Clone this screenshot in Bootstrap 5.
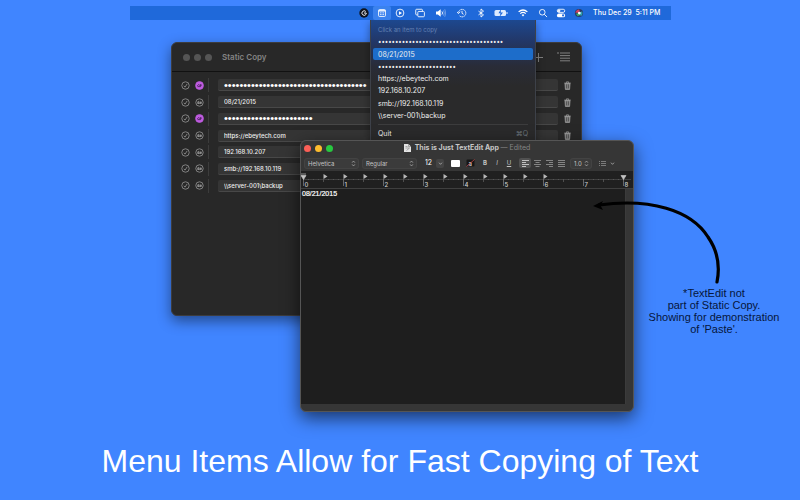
<!DOCTYPE html>
<html lang="en">
<head>
<meta charset="utf-8">
<meta name="viewport" content="width=device-width, initial-scale=1">
<title>Static Copy</title>
<link href="https://cdn.jsdelivr.net/npm/bootstrap@5.3.0/dist/css/bootstrap.min.css" rel="stylesheet">
<style>
  body { background: #4085ff; font-family: Inter, "Liberation Sans", sans-serif; font-size: 7px; line-height: 12px; color: #eee; }
  button, input, select { font: inherit; color: inherit; background: none; border: 0; padding: 0; }
  svg { display: block; flex: none; }
  .ico { width: 10px; height: 10px; fill: none; stroke: currentColor; stroke-width: 1.4; }
  .ico.heavy { stroke-width: 2; }
  .desktop { padding-top: 6px; padding-bottom: 20px; overflow: hidden; }

  .menubar { width: 100%; max-width: 541px; height: 14px; background: #1f69da; color: #fff; font-size: 7px; padding-right: 10px; z-index: 1; }
  .menubar button { width: 18px; height: 14px; display: flex; align-items: center; justify-content: center; }
  .menubar button.mid { width: 21px; }
  .menubar button.big { width: 23px; }
  .menubar button.open { background: #3b82ee; border-radius: 2px; }
  .clock { margin-left: 5px; white-space: pre; font-weight: 500; }

  .win { position: absolute; border-radius: 6px; }
  .win-copy { top: 42px; left: calc(50% - 229px); width: 411px; min-height: 274px; background: #282828; border: 1px solid #3c3c3e; box-shadow: 0 5px 14px rgba(0,0,0,.45); }
  .win-copy header { height: 29px; padding: 0 11px; border-bottom: 1px solid #111; color: #848484; }
  .light { width: 7px; height: 7px; border-radius: 50%; background: #555; }
  .win-copy .light { margin-right: 4px; }
  .light.close-btn { background: #fb5f57; }
  .light.min-btn { background: #fdbc2e; }
  .light.zoom-btn { background: #28c840; }
  .win-title { font-size: 8px; font-weight: 600; margin-left: 6px; }
  .add { margin-right: 14px; }
  .rows { height: 117px; margin-top: 5px; padding: 0 9px; }
  .rows li { flex: 1; }
  .rows .ico { color: #a0a0a0; stroke-width: 1.3; width: 9px; height: 9px; }
  .rows .ico.on { color: #bf5ce0; }
  .rows .eye { margin-left: 5px; }
  .rows .rule { width: 1px; height: 14px; background: #3c3c3c; margin: 0 9px 0 4px; }
  .rows input { height: 12px; min-width: 0; background: #353535; border-radius: 2px; padding: 1px 6px 0; border-bottom: 1px solid #484848; color: #f0f0f0; font-size: 6px; font-weight: 500; }
  .rows input.dots { font-family: "Liberation Sans", sans-serif; font-size: 11px; font-weight: 400; color: #fff; padding-top: 0; }
  .rows .bin { color: #b0b0b0; margin-left: 5px; }

  .drop { position: absolute; top: 20px; left: calc(50% - 30px); width: 166px; height: 124px; padding: 3px 2px 0; border-radius: 0 0 4px 4px; background: linear-gradient(#1d488f, #22386a 20px, #292c38 46px, #2a2a2b 66px); border: 1px solid #3d4149; border-top: 0; box-shadow: 0 3px 8px rgba(0,0,0,.4); }
  .drop .picks { height: 98px; }
  .drop .picks > * { flex: 1; padding: 1px 5px 0; text-align: left; line-height: 11px; white-space: nowrap; min-height: 0; }
  .drop .hint { font-size: 6px; color: #6480b3; }
  .drop .dots { font-family: "Open Sans", sans-serif; font-size: 9px; }
  .drop .picked { background: #1d6dca; border-radius: 2px; }
  .drop hr { margin: 3px 5px 3px; border-color: #777; }
  .quit { padding: 0 5px; }

  .win-edit { top: 140px; left: calc(50% - 100px); width: 334px; min-height: 272px; background: #363636; border: 1px solid #555; box-shadow: 0 6px 18px rgba(0,0,0,.6); overflow: hidden; }
  .win-edit header { height: 14px; padding: 0 3px; gap: 4px; position: relative; }
  .win-edit .doc-title { position: absolute; inset: 0; font-size: 7px; font-weight: 700; color: #c8c8c8; pointer-events: none; }
  .doc-title small { font-size: 7px; font-weight: 400; color: #858585; }
  .tools { height: 16px; padding: 0 4px; font-size: 6px; color: #c4c4c4; }
  .pick { position: relative; height: 9px; background: #3b3b3b; border-radius: 2px; box-shadow: 0 0 0 1px #434343; }
  .pick select { appearance: none; width: 100%; height: 9px; line-height: 9px; padding: 0 3px; display: block; }
  .pick svg { position: absolute; right: 2px; top: 1px; pointer-events: none; }
  .face { width: 53px; margin-right: 5px; }
  .spacing { width: 20px; margin: 0 8px 0 4px; }
  .size-box { width: 11px; margin-left: 4px; font-size: 7px; color: #fff; }
  .stepper { width: 8px; height: 9px; background: #444; border-radius: 2px; margin-right: 7px; display: flex; align-items: center; justify-content: center; }
  .swatch { width: 9px; height: 7px; margin-right: 6px; border-radius: 1px; background: #fff; }
  .fmt { width: 12px; height: 10px; display: flex; align-items: center; justify-content: center; border-radius: 2px; }
  .fmt.active { background: #505050; }
  .ruler { background: #202020; height: 18px; }
  .ruler text { font-size: 6px; font-weight: 500; fill: #d0d0d0; }
  .page { background: #1e1e1e; min-height: 215px; margin-right: 7px; border-right: 1px solid #3b3b3b; }
  .page textarea { resize: none; height: 214px; background: none; border: 0; color: #fff; padding: 0 1px; font: 7px/9px "Liberation Sans", Arial, sans-serif; display: block; outline: 0; -webkit-text-stroke: .2px #fff; }

  .note { position: absolute; top: 195px; left: calc(50% + 190px); width: 196px; color: #06163c; }
  .note p { font: 11px/12px "Liberation Sans", Arial, sans-serif; padding-left: 52px; margin: 0; white-space: nowrap; }
  h1 { font: 32px/38px "Liberation Sans", Arial, sans-serif; color: #fff; }
</style>
<script src="https://cdn.jsdelivr.net/npm/bootstrap@5.3.0/dist/js/bootstrap.bundle.min.js"></script>
</head>
<body>
<svg width="0" height="0" class="position-absolute" aria-hidden="true">
  <symbol id="check" viewBox="0 0 16 16"><circle cx="8" cy="8" r="6.6"/><path d="M5 8.5l2.2 2.4L11 5"/></symbol>
  <symbol id="eye" viewBox="0 0 16 16"><circle cx="8" cy="8" r="6.6"/><path d="M3.5 8.500Q5.5 5 8 7.500T12.500 7M4 9.500h8M6 6v4.500M10 6v4"/></symbol>
  <symbol id="eye-on" viewBox="0 0 16 16"><circle cx="8" cy="8" r="7" fill="currentColor"/><path d="M4 8.500Q6 5 8 7.500T12 7M4.500 10H10M10 5.500v4" stroke="#46205a" stroke-width="1.600"/></symbol>
  <symbol id="bin" viewBox="0 0 16 16"><path d="M2 3.800h12M6 3.500V1.500h4v2"/><path d="M3.500 4.500l.8 10.500h7.400l.8-10.500z" fill="currentColor" fill-opacity=".75"/><path d="M6.300 6v7M9.700 6v7" stroke="#333" stroke-width="1"/></symbol>
  <symbol id="updown" viewBox="0 0 6 8"><path d="M1.300 3L3 1l1.700 2M1.300 5L3 7l1.700-2" fill="none" stroke="#bbb" stroke-width=".8"/></symbol>
  <symbol id="down" viewBox="0 0 6 6"><path d="M1.200 2L3 4l1.800-2" fill="none" stroke="#bbb" stroke-width=".9"/></symbol>
</svg>

<main class="desktop position-relative min-vh-100 d-flex flex-column align-items-center">
  <nav class="menubar d-flex align-items-center justify-content-end" aria-label="Menu bar">
    <button aria-label="Launcher"><svg class="ico" viewBox="0 0 16 16"><circle cx="8" cy="8" r="7.500" fill="#10131c" stroke="none"/><path d="M10.800 5.500A3.600 3.600 0 1 0 11 10.500M8 8h3.500v2" stroke="#fff" stroke-width="1.500"/></svg></button>
    <button class="open" aria-label="Static Copy"><svg class="ico" viewBox="0 0 16 16"><rect x="2.500" y="2.500" width="11" height="11" rx="1.500"/><path d="M2.500 4.500h11" stroke-width="2.200"/><path d="M5 7.800h6M5 10.500h6" stroke-dasharray="1.500 .8"/></svg></button>
    <button aria-label="Play"><svg class="ico" viewBox="0 0 16 16"><circle cx="8" cy="8" r="6.200"/><path d="M6.300 5l5 3-5 3z" fill="currentColor" stroke="none"/></svg></button>
    <button class="mid" aria-label="Displays"><svg class="ico" viewBox="0 0 16 16"><path d="M4 11H2.500q-1.300 0-1.300-1.300V3.300Q1.200 2 2.500 2h8q1.300 0 1.300 1.300V5"/><rect x="4.500" y="5.500" width="10.500" height="8.500" rx="1.500"/></svg></button>
    <button class="mid" aria-label="Volume"><svg class="ico" viewBox="0 0 16 16"><path d="M0 5.500h3L7.500 2v12L3 10.500H0z" fill="currentColor" stroke="none"/><path d="M9.500 5.500q2 2.500 0 5"/><path d="M11.800 3.800q3 4.200 0 8.400M14 2q3 6 0 12" opacity=".4"/></svg></button>
    <button class="mid" aria-label="Time Machine"><svg class="ico" viewBox="0 0 16 16"><path d="M2.300 7A6 6 0 1 1 4 12.500" stroke-dasharray="2.400 .7"/><path d="M0 6l2.300 3L5 6M8 4.500V8.500l2.500 1.500"/></svg></button>
    <button aria-label="Bluetooth"><svg class="ico" viewBox="0 0 16 16"><path d="M4 5l8 6-4 3.500v-13L12 5l-8 6"/></svg></button>
    <button class="mid" aria-label="Battery"><svg width="14" height="8" viewBox="0 0 14 8"><rect x=".5" y="1" width="11.500" height="6" rx="1.500" fill="#dcebff"/><path d="M13 3v2" stroke="#dcebff"/><path d="M7 0L4.500 4.300h2L5.500 8 9 3.500H6.700z" fill="#1f69da"/></svg></button>
    <button class="big" aria-label="Wi-Fi"><svg class="ico heavy" viewBox="0 0 16 16"><path d="M1 6.200q7-6 14 0M3.600 9q4.400-3.800 8.800 0"/><path d="M5.800 11q2.200-1.800 4.400 0L8 13.500z" fill="currentColor" stroke="none"/></svg></button>
    <button aria-label="Search"><svg class="ico" viewBox="0 0 16 16"><circle cx="6.800" cy="6.800" r="4.500"/><path d="M10 10l4.500 4.500"/></svg></button>
    <button aria-label="Control Center"><svg class="ico" viewBox="0 0 16 16"><rect x="2" y="2" width="12" height="5" rx="2.500"/><circle cx="4.800" cy="4.500" r="1.500" fill="currentColor"/><rect x="1.500" y="8.800" width="13" height="6" rx="3" fill="currentColor" stroke="none"/><circle cx="11.300" cy="11.800" r="1.700" fill="#1f69da" stroke="none"/></svg></button>
    <button aria-label="Siri"><svg class="ico" viewBox="0 0 16 16"><g stroke="none"><circle cx="8" cy="8" r="6.500" fill="#283a68"/><path d="M2 7Q5 1 9 3L8 8z" fill="#d2405f"/><path d="M8 8l5-3q2 5-2 8z" fill="#2b9eb0"/><path d="M3 9l5-1 2 3-4 2z" fill="#3bab66"/><circle cx="8.500" cy="8" r="2.200" fill="#fff"/></g></svg></button>
    <time class="clock">Thu Dec 29  5:11 PM</time>
  </nav>

  <section class="win win-copy" aria-label="Static Copy">
    <header class="d-flex align-items-center">
      <span class="light"></span><span class="light"></span><span class="light"></span>
      <span class="win-title me-auto">Static Copy</span>
      <button class="add" aria-label="Add"><svg width="9" height="9" viewBox="0 0 9 9"><path d="M4.500 0v9M0 4.500h9" stroke="#8a8a8a" stroke-width=".9"/></svg></button>
      <button aria-label="List"><svg width="13" height="10" viewBox="0 0 13 10"><path d="M0 1h2M3 1h10M3 3.600h10M3 6.200h10M3 8.800h10" stroke="#8a8a8a" stroke-width=".9"/></svg></button>
    </header>
    <ul class="rows list-unstyled d-flex flex-column mb-0">
      <li class="d-flex align-items-center"><button aria-label="Enable"><svg class="ico"><use href="#check"/></svg></button><button class="eye" aria-label="Hidden"><svg class="ico on"><use href="#eye-on"/></svg></button><span class="rule"></span><input class="dots flex-fill" aria-label="Item 1" value="•••••••••••••••••••••••••••••••••••••"><button class="bin" aria-label="Delete"><svg class="ico"><use href="#bin"/></svg></button></li>
      <li class="d-flex align-items-center"><button aria-label="Enable"><svg class="ico"><use href="#check"/></svg></button><button class="eye" aria-label="Visible"><svg class="ico"><use href="#eye"/></svg></button><span class="rule"></span><input class="flex-fill" aria-label="Item 2" value="08/21/2015"><button class="bin" aria-label="Delete"><svg class="ico"><use href="#bin"/></svg></button></li>
      <li class="d-flex align-items-center"><button aria-label="Enable"><svg class="ico"><use href="#check"/></svg></button><button class="eye" aria-label="Hidden"><svg class="ico on"><use href="#eye-on"/></svg></button><span class="rule"></span><input class="dots flex-fill" aria-label="Item 3" value="•••••••••••••••••••••••"><button class="bin" aria-label="Delete"><svg class="ico"><use href="#bin"/></svg></button></li>
      <li class="d-flex align-items-center"><button aria-label="Enable"><svg class="ico"><use href="#check"/></svg></button><button class="eye" aria-label="Visible"><svg class="ico"><use href="#eye"/></svg></button><span class="rule"></span><input class="flex-fill" aria-label="Item 4" value="https://ebeytech.com"><button class="bin" aria-label="Delete"><svg class="ico"><use href="#bin"/></svg></button></li>
      <li class="d-flex align-items-center"><button aria-label="Enable"><svg class="ico"><use href="#check"/></svg></button><button class="eye" aria-label="Visible"><svg class="ico"><use href="#eye"/></svg></button><span class="rule"></span><input class="flex-fill" aria-label="Item 5" value="192.168.10.207"><button class="bin" aria-label="Delete"><svg class="ico"><use href="#bin"/></svg></button></li>
      <li class="d-flex align-items-center"><button aria-label="Enable"><svg class="ico"><use href="#check"/></svg></button><button class="eye" aria-label="Visible"><svg class="ico"><use href="#eye"/></svg></button><span class="rule"></span><input class="flex-fill" aria-label="Item 6" value="smb://192.168.10.119"><button class="bin" aria-label="Delete"><svg class="ico"><use href="#bin"/></svg></button></li>
      <li class="d-flex align-items-center"><button aria-label="Enable"><svg class="ico"><use href="#check"/></svg></button><button class="eye" aria-label="Visible"><svg class="ico"><use href="#eye"/></svg></button><span class="rule"></span><input class="flex-fill" aria-label="Item 7" value="\\server-001\backup"><button class="bin" aria-label="Delete"><svg class="ico"><use href="#bin"/></svg></button></li>
    </ul>
  </section>

  <div class="drop" role="menu">
    <div class="picks d-flex flex-column">
      <span class="hint">Click an item to copy</span>
      <button class="dots" role="menuitem">•••••••••••••••••••••••••••••••••••••</button>
      <button class="picked" role="menuitem">08/21/2015</button>
      <button class="dots" role="menuitem">•••••••••••••••••••••••</button>
      <button role="menuitem">https://ebeytech.com</button>
      <button role="menuitem">192.168.10.207</button>
      <button role="menuitem">smb://192.168.10.119</button>
      <button role="menuitem">\\server-001\backup</button>
    </div>
    <hr>
    <button class="quit d-flex justify-content-between w-100" role="menuitem"><span>Quit</span><span class="text-secondary">⌘Q</span></button>
  </div>

  <section class="win win-edit" aria-label="TextEdit">
    <header class="d-flex align-items-center">
      <button class="light close-btn" aria-label="Close"></button>
      <button class="light min-btn" aria-label="Minimize"></button>
      <button class="light zoom-btn" aria-label="Zoom"></button>
      <span class="doc-title d-flex align-items-center justify-content-center"><svg class="me-1" width="7" height="8" viewBox="0 0 7 8"><path d="M0 0h4.500L7 2.500V8H0z" fill="#e3e3e3"/><path d="M4.500 0v2.500H7M1.500 2.500h2M1.500 4h4M2.500 6.500l3-2.500" fill="none" stroke="#8a8a8a" stroke-width=".7"/></svg>This is Just TextEdit App&nbsp;<small>— Edited</small></span>
    </header>
    <div class="tools d-flex align-items-center">
      <div class="pick face"><select aria-label="Font"><option>Helvetica</option></select><svg width="5" height="7"><use href="#updown"/></svg></div>
      <div class="pick face"><select aria-label="Typeface"><option>Regular</option></select><svg width="5" height="7"><use href="#updown"/></svg></div>
      <input class="size-box" aria-label="Size" value="12">
      <button class="stepper" aria-label="Choose size"><svg width="5" height="5"><use href="#down"/></svg></button>
      <button class="swatch" aria-label="Text colour"></button>
      <button class="me-1" aria-label="Highlight colour"><svg width="9" height="8" viewBox="0 0 9 8"><rect x=".5" y=".5" width="8" height="7" rx="1" fill="#161616"/><text x="2.500" y="6.500" font-size="6" fill="#eee">a</text><path d="M.5 7.500l8-7" stroke="#c64545" stroke-width=".8"/></svg></button>
      <button class="fmt fw-bold" aria-label="Bold">B</button>
      <button class="fmt fst-italic" aria-label="Italic">I</button>
      <button class="fmt text-decoration-underline" aria-label="Underline">U</button>
      <button class="fmt ms-1 active" aria-label="Align left"><svg width="7" height="7"><path d="M0 .5h7M0 2.500h4M0 4.500h7M0 6.500h4" stroke="#ddd" stroke-width=".8"/></svg></button>
      <button class="fmt" aria-label="Align center"><svg width="7" height="7"><path d="M0 .5h7M1.500 2.500h4M0 4.500h7M1.500 6.500h4" stroke="#999" stroke-width=".8"/></svg></button>
      <button class="fmt" aria-label="Align right"><svg width="7" height="7"><path d="M0 .5h7M3 2.500h4M0 4.500h7M3 6.500h4" stroke="#999" stroke-width=".8"/></svg></button>
      <button class="fmt" aria-label="Justify"><svg width="7" height="7"><path d="M0 .5h7M0 2.500h7M0 4.500h7M0 6.500h7" stroke="#999" stroke-width=".8"/></svg></button>
      <div class="pick spacing"><select aria-label="Line spacing"><option>1.0</option></select><svg width="5" height="7"><use href="#updown"/></svg></div>
      <button class="d-flex align-items-center" aria-label="Lists"><svg width="7" height="7"><path d="M0 1.500h1M0 3.500h1M0 5.500h1M2 1.500h5M2 3.500h5M2 5.500h5" stroke="#999" stroke-width=".7"/></svg><svg class="ms-1" width="5" height="5"><use href="#down"/></svg></button>
    </div>
    <svg class="ruler w-100" id="ruler" role="img" aria-label="Ruler"></svg>
    <div class="page"><textarea class="w-100" aria-label="Document" spellcheck="false">08/21/2015</textarea></div>
  </section>

  <aside class="note">
    <svg width="140" height="92" viewBox="0 0 140 92"><path d="M9 10C60 3 101 15 118 42Q132 62 127 87" fill="none" stroke="#000" stroke-width="3.200" stroke-linecap="round"/><path d="M3 11l10-5-2.500 4.500L13 15z" fill="#000"/></svg>
    <p class="text-center">*TextEdit not<br>part of Static Copy.<br>Showing for demonstration<br>of 'Paste'.</p>
  </aside>

  <h1 class="mt-auto mb-0 text-center">Menu Items Allow for Fast Copying of Text</h1>
</main>
<script>
  // Ruler: 40px per inch, eighth-inch ticks, a tab stop every half inch up to 6.
  let marks = '<path d="M2 8.500H330M0 17.500H332" stroke="#484848" stroke-width=".8"/>';
  for (let i = 0; i <= 64; i++) {
    const x = 2.5 + i * 5, inch = i % 8 === 0;
    marks += `<path d="M${x} 8v${inch ? 7 : i % 4 === 0 ? 3 : 1}" stroke="${inch ? '#7a7a7a' : '#5a5a5a'}" stroke-width=".8"/>`;
    if (inch) marks += `<text x="${x + 1}" y="16">${i / 8}</text>`;
    if (i % 4 === 0 && i > 0 && i <= 48) marks += `<path d="M${x} 3l4 2.500-4 2.500z" fill="#b8b8b8"/>`;
  }
  marks += '<path d="M0 3h5M0 4.500h5l-2.500 4zM320 4.500h5l-2.500 4z" fill="#c4c4c4" stroke="#c4c4c4" stroke-width=".7"/>';
  document.getElementById('ruler').innerHTML = marks;
</script>
</body>
</html>
